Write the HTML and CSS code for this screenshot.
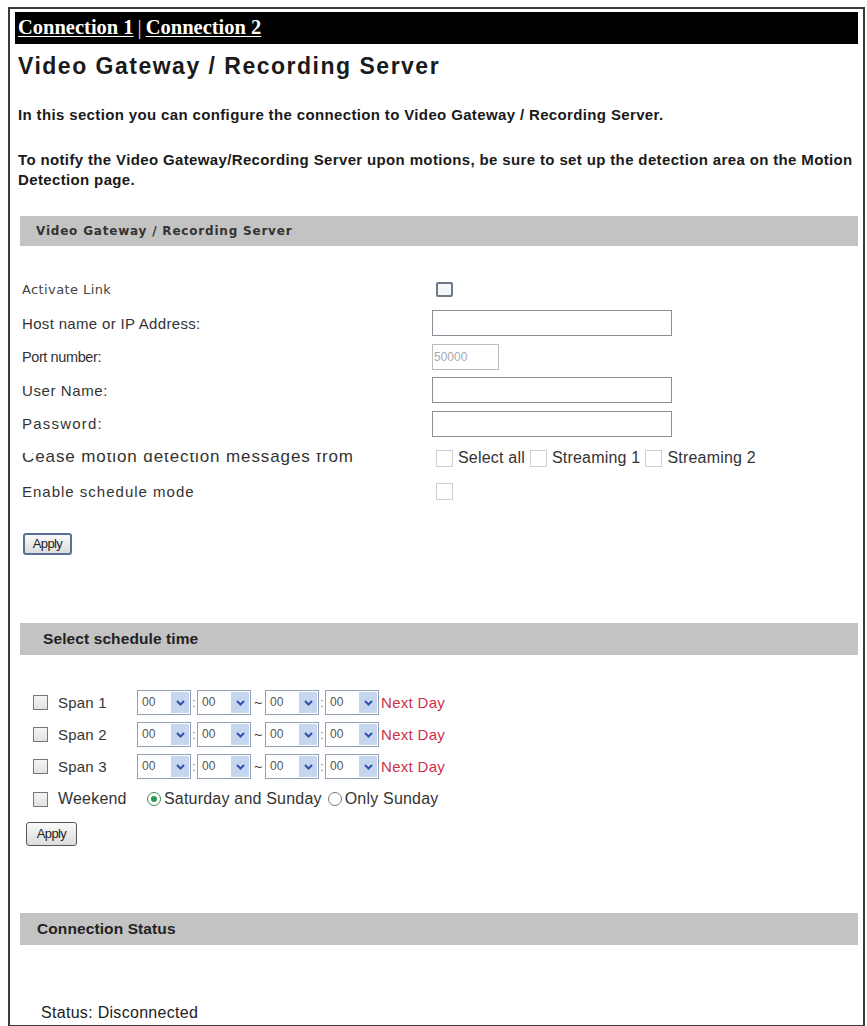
FILE: index.html
```html
<!DOCTYPE html>
<html>
<head>
<meta charset="utf-8">
<title>Video Gateway / Recording Server</title>
<link rel="stylesheet" href="styles.css">
</head>
<body>
<div class="frame">
  <div class="topbar">
    <a href="#" class="conn">Connection 1</a><span class="sep">|</span><a href="#" class="conn">Connection 2</a>
  </div>

  <h1 class="title">Video Gateway / Recording Server</h1>

  <p class="intro intro-first">In this section you can configure the connection to Video Gateway / Recording Server.</p>
  <p class="intro">To notify the Video Gateway/Recording Server upon motions, be sure to set up the detection area on the Motion<br>Detection page.</p>

  <div class="bar bar-small">Video Gateway / Recording Server</div>

  <div class="form">
    <div class="label label-small">Activate Link</div>
    <div class="ctrl"><span class="cb cb-dark"></span></div>

    <div class="label l-host">Host name or IP Address:</div>
    <div class="ctrl"><span class="field wide"></span></div>

    <div class="label l-port">Port number:</div>
    <div class="ctrl"><span class="field port">50000</span></div>

    <div class="label l-user">User Name:</div>
    <div class="ctrl"><span class="field wide"></span></div>

    <div class="label l-pass">Password:</div>
    <div class="ctrl"><span class="field wide"></span></div>

    <div class="label l-cease">Cease motion detection messages from</div>
    <div class="ctrl opts">
      <span class="cb cb-light"></span><span class="opt">Select all</span>
      <span class="cb cb-light"></span><span class="opt">Streaming 1</span>
      <span class="cb cb-light"></span><span class="opt">Streaming 2</span>
    </div>

    <div class="label l-enable">Enable schedule mode</div>
    <div class="ctrl"><span class="cb cb-light"></span></div>
  </div>

  <button class="apply apply-1">Apply</button>

  <div class="bar bar-big bar-sched">Select schedule time</div>

  <div class="schedule">
    <div class="span-row">
      <span class="cb cb-mid"></span><span class="span-name">Span 1</span>
      <span class="sel"><span class="val">00</span><span class="arr"><svg width="9" height="6" viewBox="0 0 9 6"><path d="M1 1 L4.5 4.5 L8 1" fill="none" stroke="#3050b0" stroke-width="2"/></svg></span></span>
      <span class="colon">:</span>
      <span class="sel"><span class="val">00</span><span class="arr"><svg width="9" height="6" viewBox="0 0 9 6"><path d="M1 1 L4.5 4.5 L8 1" fill="none" stroke="#3050b0" stroke-width="2"/></svg></span></span>
      <span class="tilde">~</span>
      <span class="sel"><span class="val">00</span><span class="arr"><svg width="9" height="6" viewBox="0 0 9 6"><path d="M1 1 L4.5 4.5 L8 1" fill="none" stroke="#3050b0" stroke-width="2"/></svg></span></span>
      <span class="colon">:</span>
      <span class="sel"><span class="val">00</span><span class="arr"><svg width="9" height="6" viewBox="0 0 9 6"><path d="M1 1 L4.5 4.5 L8 1" fill="none" stroke="#3050b0" stroke-width="2"/></svg></span></span>
      <span class="next">Next Day</span>
    </div>
    <div class="span-row">
      <span class="cb cb-mid"></span><span class="span-name">Span 2</span>
      <span class="sel"><span class="val">00</span><span class="arr"><svg width="9" height="6" viewBox="0 0 9 6"><path d="M1 1 L4.5 4.5 L8 1" fill="none" stroke="#3050b0" stroke-width="2"/></svg></span></span>
      <span class="colon">:</span>
      <span class="sel"><span class="val">00</span><span class="arr"><svg width="9" height="6" viewBox="0 0 9 6"><path d="M1 1 L4.5 4.5 L8 1" fill="none" stroke="#3050b0" stroke-width="2"/></svg></span></span>
      <span class="tilde">~</span>
      <span class="sel"><span class="val">00</span><span class="arr"><svg width="9" height="6" viewBox="0 0 9 6"><path d="M1 1 L4.5 4.5 L8 1" fill="none" stroke="#3050b0" stroke-width="2"/></svg></span></span>
      <span class="colon">:</span>
      <span class="sel"><span class="val">00</span><span class="arr"><svg width="9" height="6" viewBox="0 0 9 6"><path d="M1 1 L4.5 4.5 L8 1" fill="none" stroke="#3050b0" stroke-width="2"/></svg></span></span>
      <span class="next">Next Day</span>
    </div>
    <div class="span-row">
      <span class="cb cb-mid"></span><span class="span-name">Span 3</span>
      <span class="sel"><span class="val">00</span><span class="arr"><svg width="9" height="6" viewBox="0 0 9 6"><path d="M1 1 L4.5 4.5 L8 1" fill="none" stroke="#3050b0" stroke-width="2"/></svg></span></span>
      <span class="colon">:</span>
      <span class="sel"><span class="val">00</span><span class="arr"><svg width="9" height="6" viewBox="0 0 9 6"><path d="M1 1 L4.5 4.5 L8 1" fill="none" stroke="#3050b0" stroke-width="2"/></svg></span></span>
      <span class="tilde">~</span>
      <span class="sel"><span class="val">00</span><span class="arr"><svg width="9" height="6" viewBox="0 0 9 6"><path d="M1 1 L4.5 4.5 L8 1" fill="none" stroke="#3050b0" stroke-width="2"/></svg></span></span>
      <span class="colon">:</span>
      <span class="sel"><span class="val">00</span><span class="arr"><svg width="9" height="6" viewBox="0 0 9 6"><path d="M1 1 L4.5 4.5 L8 1" fill="none" stroke="#3050b0" stroke-width="2"/></svg></span></span>
      <span class="next">Next Day</span>
    </div>
    <div class="span-row">
      <span class="cb cb-mid"></span><span class="span-name">Weekend</span>
      <span class="radio radio-on"></span><span class="rlabel">Saturday and Sunday</span>
      <span class="radio"></span><span class="rlabel">Only Sunday</span>
    </div>
  </div>

  <button class="apply apply-2">Apply</button>

  <div class="bar bar-big bar-status">Connection Status</div>

  <div class="status">Status: Disconnected</div>
</div>
</body>
</html>
```

FILE: styles.css
```css
html, body {
  margin: 0;
  padding: 0;
  background: #fff;
}

body {
  font-family: "Liberation Sans", Arial, sans-serif;
  color: #222;
}

.frame {
  box-sizing: border-box;
  margin: 7px 2px 0 8px;
  height: 1019px;
  border: 2px solid #3a3a3a;
  border-bottom-width: 1px;
  padding: 3px 5px 0 5px;
  overflow: hidden;
}

/* black connection tab strip */
.topbar {
  background: #000;
  height: 32px;
  padding-left: 3px;
  font-family: "Liberation Serif", "Times New Roman", serif;
  font-weight: bold;
  font-size: 20.5px;
  line-height: 30px;
  color: #fff;
}

.conn {
  color: #fff;
  text-decoration: underline;
  text-decoration-thickness: 1px;
  text-underline-offset: 2px;
}

.sep {
  color: #ddd;
  font-weight: normal;
  margin: 0 4px;
}

.title {
  margin: 8px 0 0 3px;
  font-size: 23px;
  line-height: 28px;
  font-weight: bold;
  color: #1a1a1a;
  letter-spacing: 1.5px;
}

.intro {
  margin: 25px 0 0 3px;
  font-size: 15px;
  font-weight: bold;
  line-height: 20px;
  letter-spacing: 0.36px;
  color: #1a1a1a;
  white-space: nowrap;
}

/* grey section headers */
.bar {
  margin-left: 5px;
  background: #c3c3c3;
  font-weight: bold;
  color: #222;
}

.bar-small {
  margin-top: 26px;
  height: 30px;
  line-height: 30px;
  padding-left: 16px;
  font-family: "DejaVu Sans", Verdana, sans-serif;
  font-size: 12px;
  letter-spacing: 0.8px;
  color: #333;
}

.bar-big {
  height: 32px;
  line-height: 32px;
  font-size: 15.5px;
  letter-spacing: 0.1px;
}

.bar-sched {
  margin-top: 68px;
  padding-left: 23px;
}

.bar-status {
  margin-top: 67px;
  padding-left: 17px;
}

/* settings form */
.form {
  display: grid;
  grid-template-columns: 410px auto;
  grid-template-rows: repeat(5, 33.5px) 35px 31px;
  align-items: center;
  margin: 27px 0 0 7px;
}

.label {
  font-size: 15px;
  color: #333;
  white-space: nowrap;
}

.label-small {
  font-family: "DejaVu Sans", Verdana, sans-serif;
  font-size: 13px;
  letter-spacing: 0.4px;
  color: #444;
}

.l-host { letter-spacing: 0.33px; }
.l-port { font-size: 14.5px; letter-spacing: -0.4px; }
.l-user { letter-spacing: 0.6px; }
.l-pass { letter-spacing: 1.2px; }
.l-enable { letter-spacing: 1px; }

/* this label loses the tops of its letters */
.l-cease {
  font-size: 17px;
  letter-spacing: 0.9px;
  clip-path: inset(6px 0 0 0);
  margin-top: -2px;
}

.ctrl {
  display: flex;
  align-items: center;
}

.field {
  box-sizing: border-box;
  display: inline-block;
  height: 26px;
  border: 1px solid #8a9098;
  background: #fff;
}

.wide {
  width: 240px;
}

.port {
  width: 67px;
  border-color: #b8bcc0;
  color: #aaa;
  font-size: 12px;
  line-height: 24px;
  padding-left: 1px;
}

.cb {
  box-sizing: border-box;
  display: inline-block;
  flex: none;
  width: 16px;
  height: 16px;
  background: #fff;
}

.ctrl .cb {
  margin-left: 4px;
}

.cb-dark {
  width: 17px;
  height: 15px;
  border: 2px solid #6e7a8a;
  border-radius: 2px;
  background: #f4f6f8;
}

.cb-light {
  width: 17px;
  height: 17px;
  border: 1px solid #cfcfcf;
}

.cb-mid {
  width: 15px;
  height: 15px;
  border: 1px solid #777;
  background: linear-gradient(#f4f4f4, #e2e2e2);
}

.opts .opt {
  font-size: 16px;
  letter-spacing: 0.2px;
  color: #333;
  margin: 0 5px 0 5px;
}

.opts .opt + .cb {
  margin-left: 0;
}

.apply {
  display: block;
  font-family: "Liberation Sans", Arial, sans-serif;
  font-size: 13px;
  color: #222;
  letter-spacing: -0.6px;
  background: linear-gradient(#fafafa, #dcdcdc);
  border: 2px solid #5a6e9a;
  border-radius: 3px;
  padding: 0 4px;
  height: 22px;
}

.apply-1 {
  margin: 26px 0 0 8px;
  width: 49px;
}

.apply-2 {
  margin: 6px 0 0 11px;
  width: 51px;
  height: 24px;
  border: 1px solid #555;
}

/* schedule time rows */
.schedule {
  margin: 32px 0 0 18px;
}

.span-row {
  display: flex;
  align-items: center;
  height: 32px;
  font-size: 15px;
  color: #333;
}

.span-row:last-child {
  height: 33px;
}

.span-name {
  width: 79px;
  margin-left: 10px;
  letter-spacing: 0.2px;
}

.sel {
  box-sizing: border-box;
  display: inline-flex;
  width: 54px;
  height: 25px;
  border: 1px solid #8fa0b8;
  background: #fff;
  padding: 1px;
}

.sel .val {
  flex: 1;
  font-size: 12px;
  line-height: 21px;
  padding-left: 3px;
  color: #555;
}

.sel .arr {
  width: 18px;
  background: #c6d6ee;
  display: flex;
  align-items: center;
  justify-content: center;
}

.colon {
  width: 6px;
  font-size: 12px;
  color: #777;
  text-align: center;
}

.tilde {
  width: 14px;
  font-size: 14px;
  text-align: center;
  color: #333;
}

.next {
  color: #d0304a;
  font-size: 15px;
  margin-left: 2px;
  letter-spacing: 0.3px;
}

.radio {
  box-sizing: border-box;
  display: inline-block;
  flex: none;
  width: 14px;
  height: 14px;
  border: 1px solid #777;
  border-radius: 50%;
  background: #fff;
  margin-right: 3px;
  position: relative;
}

.span-name + .radio {
  margin-left: 10px;
}

.radio-on {
  border-color: #3a8a4a;
}

.radio-on::after {
  content: "";
  position: absolute;
  left: 3px;
  top: 3px;
  width: 6px;
  height: 6px;
  border-radius: 50%;
  background: #2a9a50;
}

.rlabel {
  font-size: 16px;
  letter-spacing: 0.2px;
  margin-right: 6px;
}

.span-row:last-child .span-name {
  font-size: 16px;
}

.status {
  margin: 59px 0 0 26px;
  font-size: 16px;
  letter-spacing: 0.3px;
  color: #222;
}
```
